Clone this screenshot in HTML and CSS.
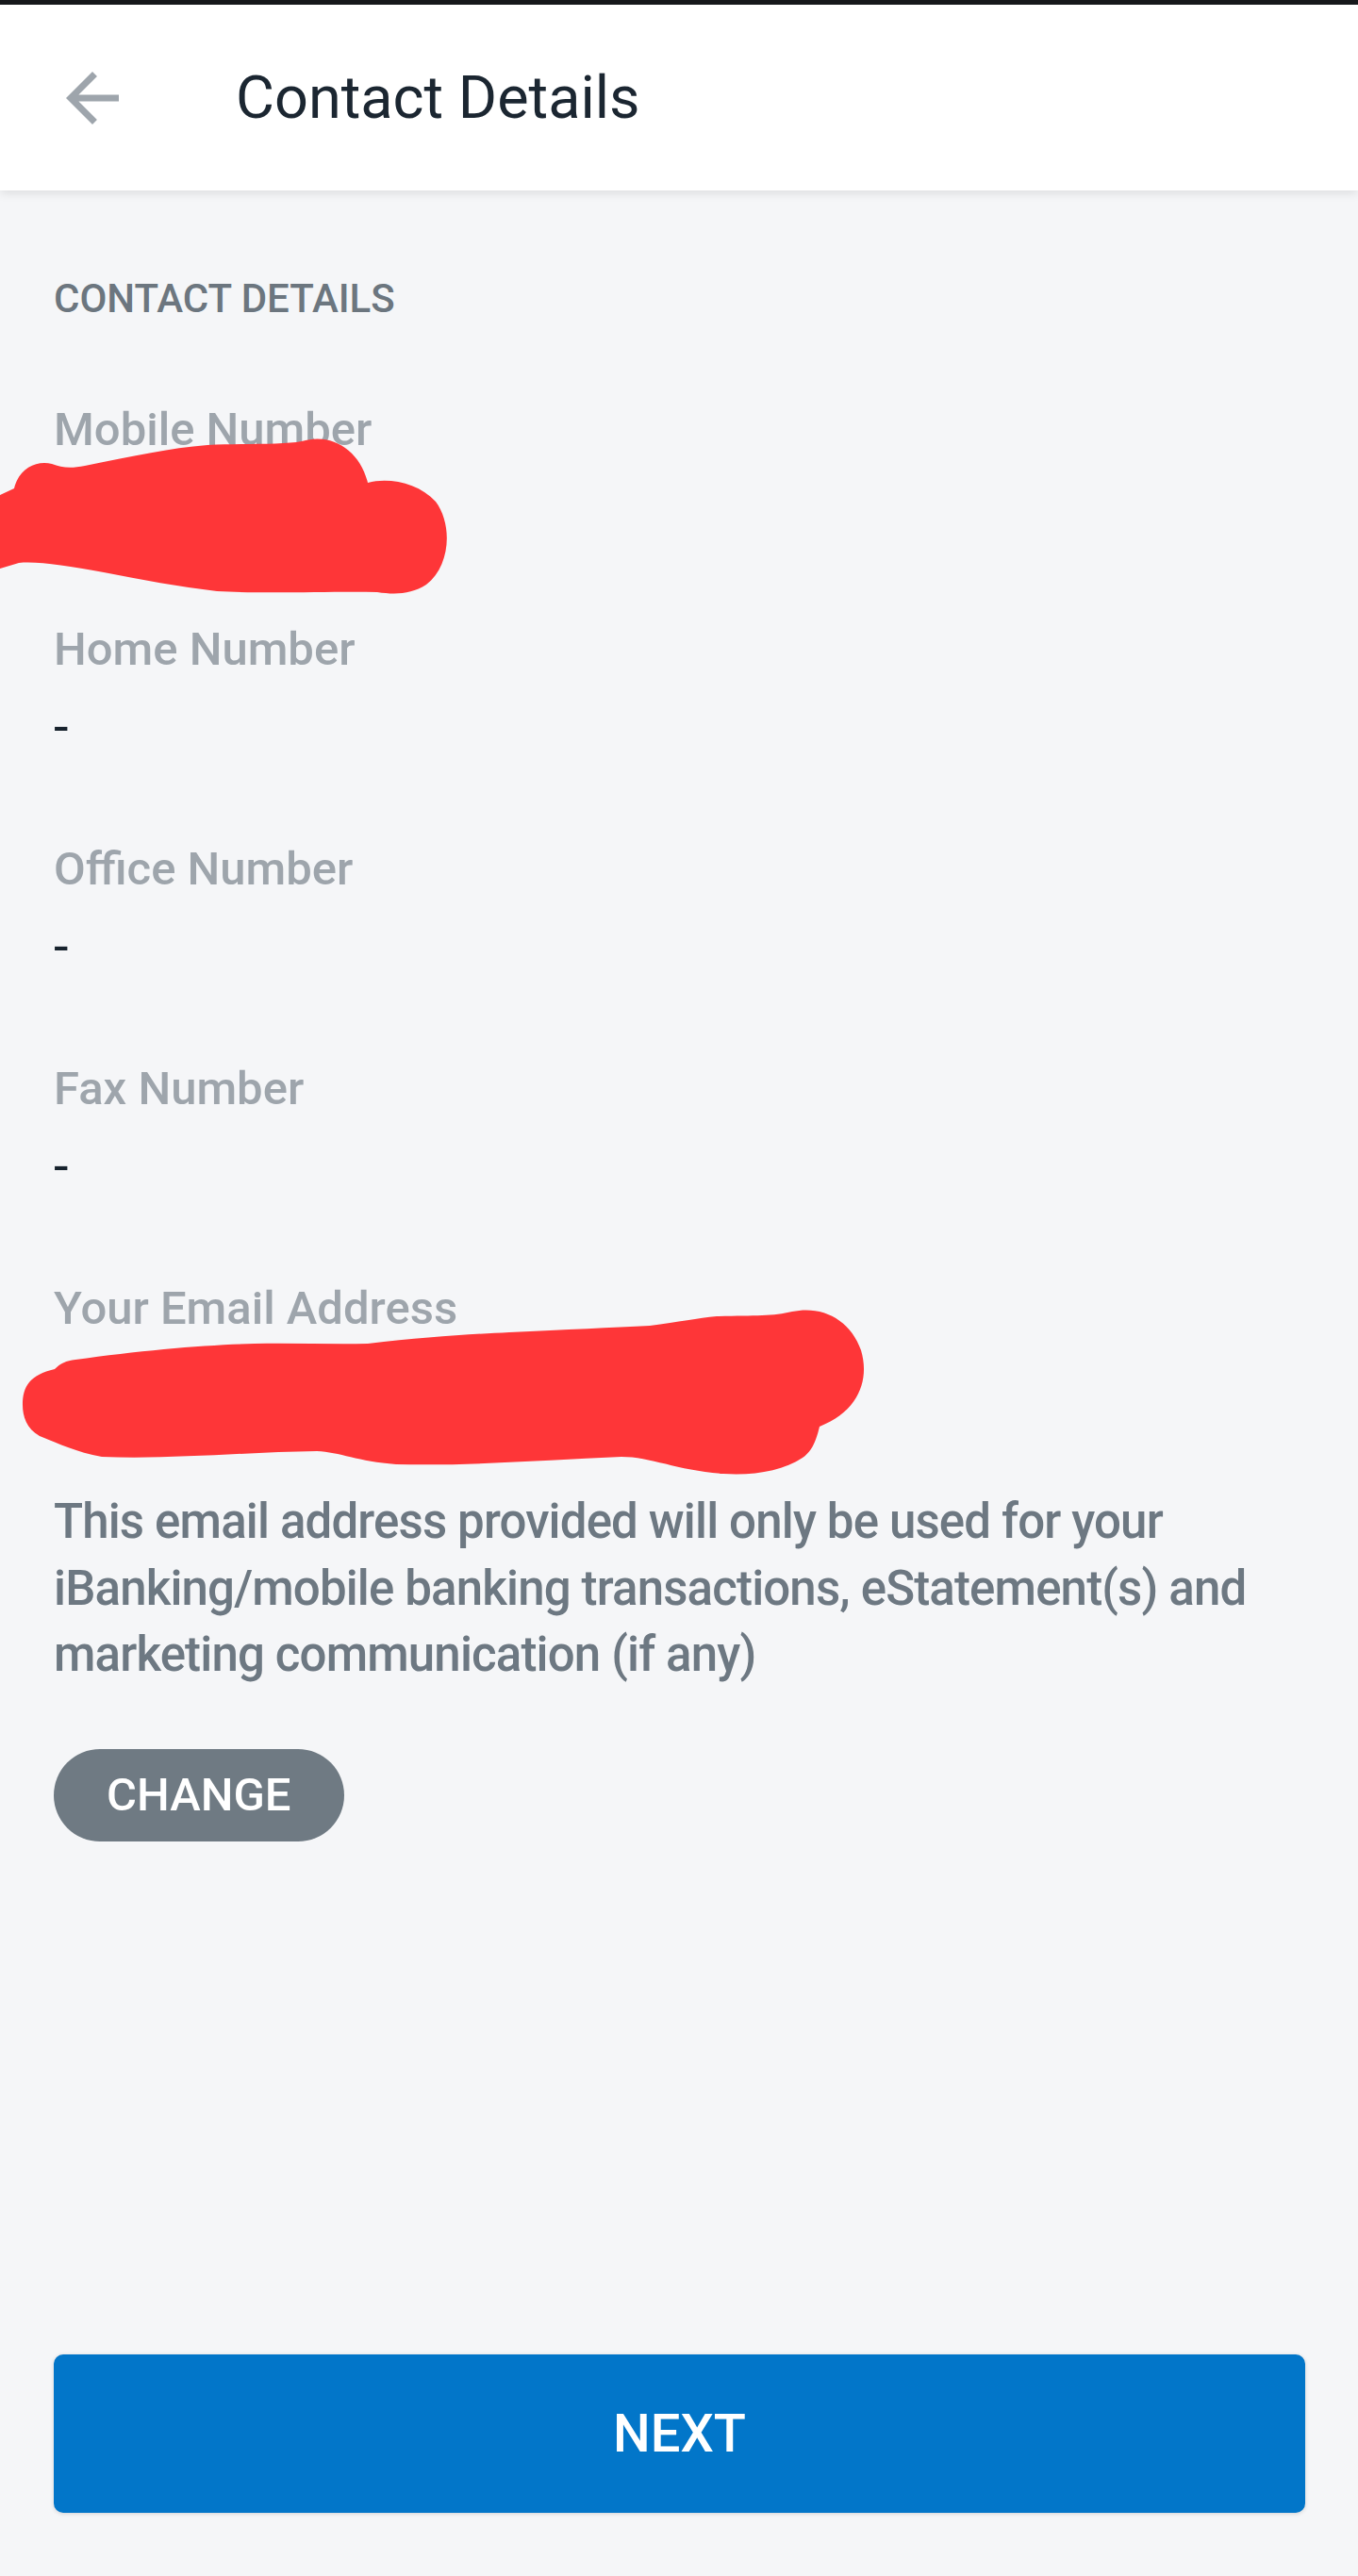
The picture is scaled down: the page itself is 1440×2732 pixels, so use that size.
FILE: index.html
```html
<!DOCTYPE html>
<html lang="en">
<head>
<meta charset="utf-8">
<title>Contact Details</title>
<link rel="stylesheet" href="styles.css">
</head>
<body>
<div class="screen">
  <div class="status-strip"></div>
  <header class="appbar">
    <button class="back" aria-label="Back">
      <svg viewBox="0 0 24 24" width="84" height="84"><path d="M20 11H7.83l5.59-5.59L12 4l-8 8 8 8 1.41-1.41L7.83 13H20v-2z" fill="#9ea5ac"/></svg>
    </button>
    <h1 class="title">Contact Details</h1>
  </header>

  <main class="content">
    <h2 class="section">CONTACT DETAILS</h2>

    <div class="field">
      <div class="label">Mobile Number</div>
      <div class="value">&nbsp;</div>
    </div>
    <div class="field">
      <div class="label">Home Number</div>
      <div class="value">-</div>
    </div>
    <div class="field">
      <div class="label">Office Number</div>
      <div class="value">-</div>
    </div>
    <div class="field">
      <div class="label">Fax Number</div>
      <div class="value">-</div>
    </div>
    <div class="field field-last">
      <div class="label">Your Email Address</div>
      <div class="value">&nbsp;</div>
    </div>

    <p class="note">This email address provided will only be used for your iBanking/mobile banking transactions, eStatement(s) and marketing communication (if any)</p>

    <button class="change">CHANGE</button>
  </main>

  <footer class="footer">
    <button class="next">NEXT</button>
  </footer>

  <svg class="redact" viewBox="0 0 1440 2732" width="1440" height="2732" aria-hidden="true">
    <path fill="#fe3638" d="M0,525 L15,518 C20,497 38,488 55,492 C65,496 75,497 90,494 C140,484 180,475 220,472 C260,470 300,472 320,468 C352,458 382,478 390,512 C412,506 444,512 462,532 C480,556 478,600 452,620 C436,630 420,631 400,628 C350,627 280,630 230,627 C190,622 150,615 110,607 C70,600 40,595 20,597 L0,603 Z"/>
    <path fill="#fe3638" d="M24,1490 C24,1470 32,1458 58,1452 C64,1446 70,1443 80,1442 C150,1432 220,1426 270,1425 C310,1424 350,1426 390,1425 C450,1418 500,1415 540,1413 C600,1410 650,1408 689,1406 C720,1402 740,1398 760,1396 C800,1395 820,1396 840,1391 C872,1384 902,1400 913,1432 C922,1462 912,1496 869,1513 C865,1530 860,1540 851,1546 C830,1560 800,1565 767,1563 C720,1560 690,1545 659,1545 C580,1548 500,1555 420,1553 C380,1550 360,1540 336,1539 C260,1540 180,1548 108,1545 C80,1540 60,1530 42,1523 C28,1515 24,1502 24,1490 Z"/>
  </svg>
</div>
</body>
</html>
```

FILE: styles.css
```css
* {
  box-sizing: border-box;
}

html, body {
  margin: 0;
  padding: 0;
}

body {
  background: #f5f6f8;
  font-family: Roboto, "Noto Sans", "Liberation Sans", sans-serif;
}

.screen {
  position: relative;
  width: 1440px;
  min-height: 2732px;
  display: flex;
  flex-direction: column;
  background: #f5f6f8;
  overflow: hidden;
}

.status-strip {
  height: 5px;
  background: #17191c;
}

.appbar {
  height: 197px;
  background: #ffffff;
  display: flex;
  align-items: center;
  padding-left: 56px;
  gap: 110px;
  box-shadow: 0 3px 10px rgba(0, 0, 0, 0.10);
  position: relative;
  z-index: 1;
}

.back {
  width: 84px;
  height: 84px;
  padding: 0;
  margin: 0;
  border: 0;
  background: transparent;
  display: flex;
}

.title {
  margin: 0;
  font-size: 63px;
  line-height: 76px;
  font-weight: 400;
  color: #1b2631;
}

.content {
  flex: 1;
  padding: 90px 57px 0;
  display: flex;
  flex-direction: column;
  align-items: flex-start;
}

.section {
  margin: 0 0 85px;
  font-size: 42px;
  line-height: 50px;
  font-weight: 500;
  color: #6c767f;
}

.field {
  display: flex;
  flex-direction: column;
  gap: 20px;
  margin-bottom: 89px;
}

.field-last {
  margin-bottom: 76px;
}

.label {
  font-size: 49px;
  line-height: 58px;
  font-weight: 500;
  color: #9ea5ac;
}

.value {
  font-size: 56px;
  line-height: 66px;
  font-weight: 400;
  color: #17222d;
}

.note {
  margin: 0 0 64px;
  font-size: 51px;
  line-height: 70.5px;
  font-weight: 500;
  letter-spacing: -0.85px;
  color: #6d7882;
  max-width: 1326px;
}

.change {
  height: 98px;
  padding: 0 56px;
  border: 0;
  border-radius: 49px;
  background: #6f7a83;
  color: #ffffff;
  font-family: inherit;
  font-size: 49px;
  font-weight: 500;
}

.footer {
  padding: 0 56px 67px 57px;
}

.next {
  display: block;
  width: 100%;
  height: 168px;
  border: 0;
  border-radius: 10px;
  background: #0276c9;
  color: #ffffff;
  font-family: inherit;
  font-size: 56px;
  font-weight: 500;
  box-shadow: 0 1px 4px rgba(0, 0, 0, 0.15);
}

.redact {
  position: absolute;
  left: 0;
  top: 0;
  pointer-events: none;
  z-index: 2;
}
```
